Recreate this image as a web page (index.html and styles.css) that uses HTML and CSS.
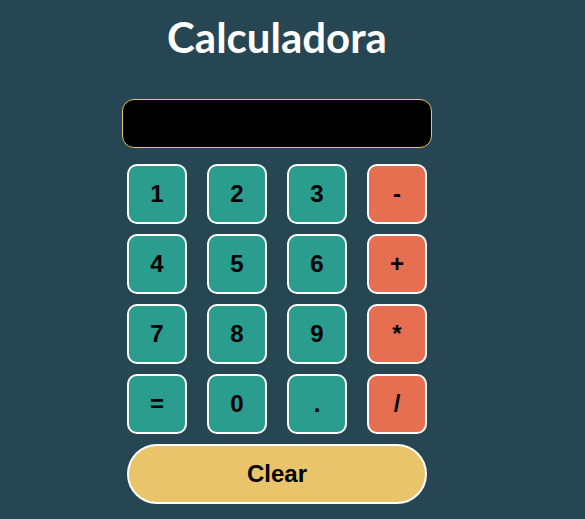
FILE: index.html
```html
<!DOCTYPE html>
<html lang="es">
<head>
<meta charset="utf-8">
<title>Calculadora</title>
<link rel="stylesheet" href="styles.css">
</head>
<body>
<main class="app">
  <h1 class="title">Calculadora</h1>
  <div class="display"></div>
  <div class="keys">
    <button class="key num">1</button>
    <button class="key num">2</button>
    <button class="key num">3</button>
    <button class="key op">-</button>
    <button class="key num">4</button>
    <button class="key num">5</button>
    <button class="key num">6</button>
    <button class="key op">+</button>
    <button class="key num">7</button>
    <button class="key num">8</button>
    <button class="key num">9</button>
    <button class="key op">*</button>
    <button class="key num">=</button>
    <button class="key num">0</button>
    <button class="key num">.</button>
    <button class="key op">/</button>
  </div>
  <button class="clear">Clear</button>
</main>
</body>
</html>
```
FILE: styles.css
```css
html, body {
  margin: 0;
  height: 100%;
  background: #264653;
}
.app {
  width: 554px;
  display: flex;
  flex-direction: column;
  align-items: center;
}
.title {
  font-family: Lato, "Open Sans", sans-serif;
  font-weight: 700;
  font-size: 42px;
  line-height: 48px;
  color: #ffffff;
  margin: 13px 0 38px;
}
.display {
  box-sizing: border-box;
  width: 310px;
  height: 49px;
  background: #000;
  border: 1px solid #e9c46a;
  border-radius: 12px;
}
.keys {
  margin-top: 16px;
  display: grid;
  grid-template-columns: repeat(4, 60px);
  grid-auto-rows: 60px;
  column-gap: 20px;
  row-gap: 10px;
}
.key, .clear {
  box-sizing: border-box;
  border: 2px solid #ffffff;
  font-family: "Liberation Sans", Arial, sans-serif;
  font-weight: 700;
  font-size: 24px;
  color: #000;
  padding: 0;
}
.key {
  width: 60px;
  height: 60px;
  border-radius: 10px;
}
.num { background: #2a9d8f; }
.op { background: #e76f51; }
.clear {
  margin-top: 10px;
  width: 300px;
  height: 60px;
  border-radius: 30px;
  background: #e9c46a;
}
```
